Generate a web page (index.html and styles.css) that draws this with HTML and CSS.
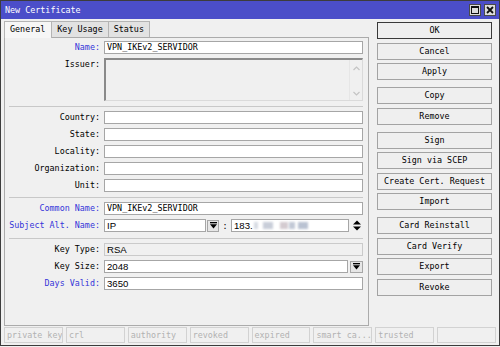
FILE: index.html
```html
<!DOCTYPE html>
<html>
<head>
<meta charset="utf-8">
<link rel="stylesheet" href="styles.css">
</head>
<body>
<div class="window">
  <div class="titlebar">
    <span class="title">New Certificate</span>
    <div class="tbtns">
      <span class="tbtn"><svg width="8" height="8" viewBox="0 0 8 8"><rect x="0.5" y="0.5" width="7" height="7" fill="none" stroke="#111" stroke-width="1"/><rect x="0" y="0" width="8" height="2" fill="#111"/></svg></span>
      <span class="tbtn"><svg width="8" height="8" viewBox="0 0 8 8"><path d="M1 1 L7 7 M7 1 L1 7" stroke="#111" stroke-width="1.8"/></svg></span>
    </div>
  </div>
  <div class="content">
    <div class="left">
      <div class="tabs">
        <span class="tab active">General</span>
        <span class="tab">Key Usage</span>
        <span class="tab">Status</span>
      </div>
      <div class="panel">
        <div class="form">
          <span class="lbl blue">Name:</span>
          <div class="input">VPN_IKEv2_SERVIDOR</div>

          <span class="lbl">Issuer:</span>
          <div class="textarea">
            <div class="ta-body"></div>
            <div class="ta-scroll">
              <svg width="7" height="5" viewBox="0 0 7 5"><path d="M0.5 4 L3.5 1 L6.5 4" fill="none" stroke="#c4c4c4" stroke-width="1.2"/></svg>
              <svg width="7" height="5" viewBox="0 0 7 5"><path d="M0.5 1 L3.5 4 L6.5 1" fill="none" stroke="#c4c4c4" stroke-width="1.2"/></svg>
            </div>
          </div>

          <div class="sep sep1"></div>

          <span class="lbl">Country:</span>
          <div class="input"></div>
          <span class="lbl">State:</span>
          <div class="input"></div>
          <span class="lbl">Locality:</span>
          <div class="input"></div>
          <span class="lbl">Organization:</span>
          <div class="input"></div>
          <span class="lbl">Unit:</span>
          <div class="input"></div>

          <div class="sep sep2"></div>

          <span class="lbl blue">Common Name:</span>
          <div class="input">VPN_IKEv2_SERVIDOR</div>

          <span class="lbl blue">Subject Alt. Name:</span>
          <div class="field san">
            <div class="input sans ip">IP</div>
            <span class="dd"><svg width="7" height="7" viewBox="0 0 7 7"><rect x="0" y="0" width="7" height="1.3" fill="#000"/><path d="M0 2.3 H7 L3.5 6.5 Z" fill="#000"/></svg></span>
            <span class="colon">:</span>
            <div class="input sans addr">183.<span class="blur b1"></span><span class="blur b2"></span><span class="blur b3"></span><span class="blur b4"></span><span class="blur b5"></span></div>
            <span class="spin"><svg width="8" height="11" viewBox="0 0 8 11"><path d="M0 4.5 L4 0.5 L8 4.5 Z M0 6.5 L4 10.5 L8 6.5 Z" fill="#000"/></svg></span>
          </div>

          <div class="sep sep3"></div>

          <span class="lbl">Key Type:</span>
          <div class="input sans ro">RSA</div>

          <span class="lbl">Key Size:</span>
          <div class="field">
            <div class="input sans grow">2048</div>
            <span class="dd dd2"><svg width="7" height="7" viewBox="0 0 7 7"><rect x="0" y="0" width="7" height="1.3" fill="#000"/><path d="M0 2.3 H7 L3.5 6.5 Z" fill="#000"/></svg></span>
          </div>

          <span class="lbl blue">Days Valid:</span>
          <div class="input sans">3650</div>
        </div>
      </div>
    </div>
    <div class="buttons">
      <div class="group">
        <span class="btn default">OK</span>
        <span class="btn">Cancel</span>
        <span class="btn">Apply</span>
      </div>
      <div class="group">
        <span class="btn">Copy</span>
        <span class="btn">Remove</span>
      </div>
      <div class="group">
        <span class="btn">Sign</span>
        <span class="btn">Sign via SCEP</span>
        <span class="btn">Create Cert. Request</span>
        <span class="btn">Import</span>
      </div>
      <div class="group">
        <span class="btn">Card Reinstall</span>
        <span class="btn">Card Verify</span>
        <span class="btn">Export</span>
        <span class="btn">Revoke</span>
      </div>
    </div>
  </div>
  <div class="status">
    <span class="cell">private key</span>
    <span class="cell">crl</span>
    <span class="cell">authority</span>
    <span class="cell">revoked</span>
    <span class="cell">expired</span>
    <span class="cell">smart ca...</span>
    <span class="cell">trusted</span>
    <span class="cell"></span>
  </div>
</div>
</body>
</html>
```
FILE: styles.css
```css
* { box-sizing: border-box; margin: 0; padding: 0; }
html, body { width: 500px; height: 347px; overflow: hidden; background: #f0f0f0; }
body {
  font-family: "DejaVu Sans Mono", "Liberation Mono", monospace;
  font-size: 8.4px;
  color: #000;
}
.window {
  width: 500px;
  height: 346px;
  border: 1px solid #3c3c3c;
  display: flex;
  flex-direction: column;
  background: #f0f0f0;
}
.titlebar {
  flex: none;
  height: 18px;
  background: #4b4ec9;
  color: #fff;
  display: flex;
  align-items: center;
  padding: 0 3px 0 4px;
}
.title { flex: 1; }
.tbtns { display: flex; gap: 3px; }
.tbtn {
  width: 12px;
  height: 12px;
  background: #dcdcdc;
  border: 1px solid #4a4a4a;
  display: flex;
  align-items: center;
  justify-content: center;
}
.content {
  flex: none;
  height: 307px;
  display: flex;
  gap: 8px;
  padding: 2px 6px 0 3px;
}
.left {
  width: 365px;
  display: flex;
  flex-direction: column;
}
.tabs {
  display: flex;
  height: 16px;
  flex: none;
  position: relative;
  z-index: 1;
}
.tab {
  height: 16px;
  line-height: 15px;
  padding: 0 5px;
  border: 1px solid #b4b4b4;
  border-bottom: none;
  background: #e2e2e2;
  margin-right: -1px;
}
.tab.active {
  height: 17px;
  background: #f6f6f6;
  padding: 0 6px 0 5px;
}
.panel {
  flex: 1;
  border: 1px solid #ababab;
  background: #f0f0f0;
}
.form {
  display: grid;
  grid-template-columns: 96px 1fr;
  column-gap: 3px;
  row-gap: 4px;
  padding: 3px 5px 0 0;
}
.lbl {
  text-align: right;
  line-height: 13px;
  height: 13px;
  padding-right: 1px;
  white-space: nowrap;
}
.lbl.blue { color: #3535d9; }
.input {
  height: 13px;
  border: 1px solid #a6a6a6;
  background: #fff;
  padding-left: 2px;
  line-height: 11px;
  white-space: nowrap;
  overflow: hidden;
}
.sans {
  font-family: "Liberation Sans", Arial, sans-serif;
  font-size: 9.6px;
}
.input.ro { background: #f0f0f0; border-color: #cacaca; }
.textarea {
  height: 43px;
  display: flex;
  border-top: 2px solid #8a8a8a;
  border-left: 2px solid #8a8a8a;
  border-right: 1px solid #dadada;
  border-bottom: 1px solid #dadada;
  background: #f0f0f0;
}
.ta-body { flex: 1; }
.ta-scroll {
  width: 13px;
  display: flex;
  flex-direction: column;
  align-items: center;
  justify-content: space-between;
  padding: 6px 0 4px;
  border-left: 1px solid #e6e6e6;
}
.sep {
  grid-column: 1 / -1;
  height: 1px;
  background: #c8c8c8;
  margin-left: 4px;
}
.sep1 { margin-top: 1px; }
.sep2 { margin-top: 1px; }
.sep3 { margin-top: 2px; }
.field {
  display: flex;
  align-items: center;
  height: 13px;
}
.grow { flex: 1; }
.ip { width: 102px; }
.dd {
  width: 12px;
  height: 12px;
  margin-left: 1px;
  border: 1px solid #a6a6a6;
  background: #e6e6e6;
  display: flex;
  align-items: center;
  justify-content: center;
}
.dd2 { width: 13px; margin-left: 2px; }
.colon { width: 12px; text-align: center; }
.addr {
  flex: 1;
  display: flex;
  align-items: center;
}
.blur {
  display: inline-block;
  height: 7px;
  filter: blur(0.8px);
}
.b1 { width: 4px; background: #d7dbe3; margin-left: 1px; }
.b2 { width: 10px; background: #c9ced9; margin-left: 5px; }
.b3 { width: 8px; background: #d4cbd0; margin-left: 7px; }
.b4 { width: 6px; background: #c2c9d6; margin-left: 1px; }
.b5 { width: 10px; background: #b9c2d2; margin-left: 3px; }
.spin {
  width: 14px;
  display: flex;
  justify-content: center;
  padding-left: 2px;
}
.buttons {
  width: 115px;
  display: flex;
  flex-direction: column;
  gap: 7px;
  padding-top: 1px;
}
.group {
  display: flex;
  flex-direction: column;
  gap: 3.5px;
}
.btn {
  height: 17px;
  line-height: 15px;
  text-align: center;
  border: 1px solid #a3a3a3;
  background: #efefef;
  white-space: nowrap;
}
.btn.default { border-color: #3a3a3a; }
.status {
  flex: none;
  height: 16px;
  margin-top: 1px;
  display: grid;
  grid-template-columns: repeat(8, 1fr);
  column-gap: 3px;
  padding: 0 3px;
}
.cell {
  border: 1px solid #d2d2d2;
  color: #b2b2b2;
  padding-left: 2px;
  line-height: 14px;
  white-space: nowrap;
  overflow: hidden;
}
```
